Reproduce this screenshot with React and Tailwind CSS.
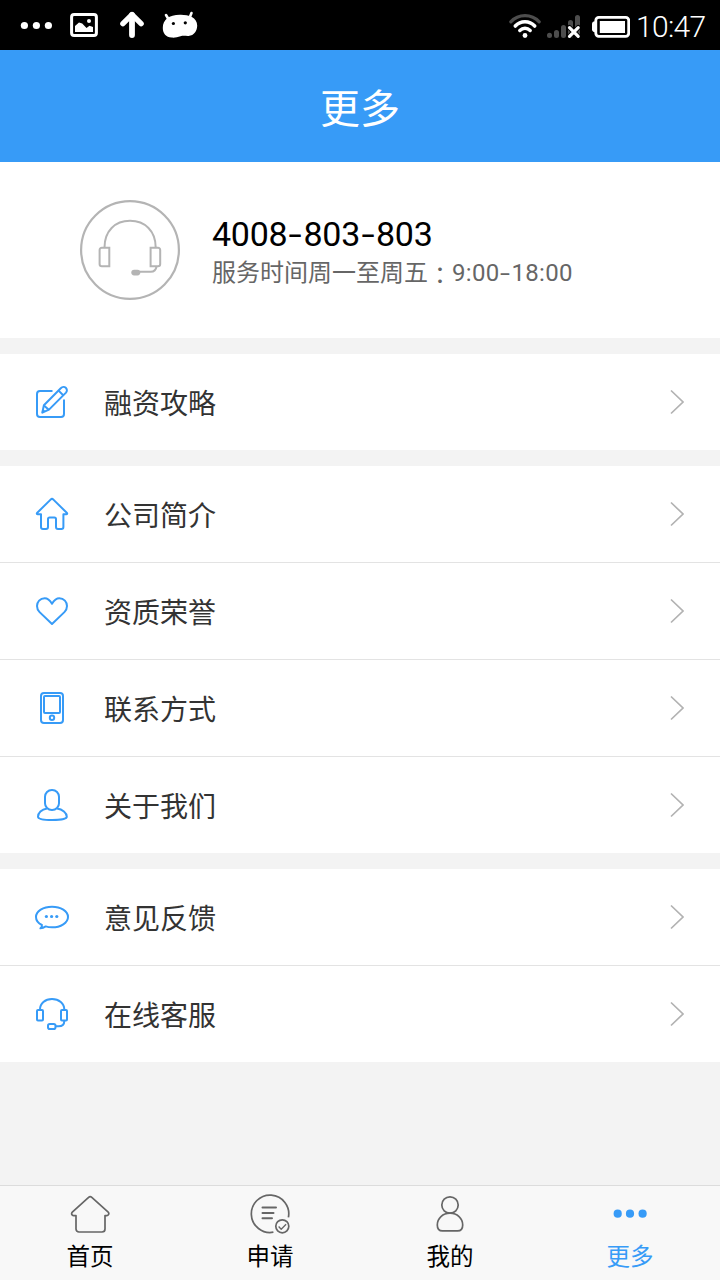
import React, { useState } from 'react';

// Icons for the menu rows, all on a 36px grid
const ICONS = {
  edit: (
    <>
      <path d="M18.500 7H6a3 3 0 0 0-3 3v20a3 3 0 0 0 3 3h21a3 3 0 0 0 3-3V15.500" />
      <path d="M8.300 28.600l1.600-7.400L27 4a3.200 3.200 0 0 1 5 4.600L15 25.600z" />
      <path d="M24.600 6.600l4.600 4.600M10.200 21.800l4.600 4M8.300 28.600l2.200-2.400" />
    </>
  ),
  house: (
    <path d="M16.600 3.600a2 2 0 0 1 2.800 0L33 17c.4.5.1 1.300-.6 1.300h-3V31a2 2 0 0 1-2 2H24a2 2 0 0 1-2-2v-8a1.600 1.600 0 0 0-1.600-1.600h-4.800A1.600 1.600 0 0 0 14 23v8a2 2 0 0 1-2 2H9a2 2 0 0 1-2-2V18.300H3.600c-.7 0-1-.8-.6-1.300z" />
  ),
  heart: (
    <path d="M18 10.800C15.800 7.200 13.800 5.300 10.700 5.300C6 5.300 3 8.900 3 13c0 2.400 1 4.500 2.600 6.100L18 31l12.400-11.900C32 17.500 33 15.400 33 13c0-4.100-3-7.700-7.700-7.700C22.200 5.300 20.200 7.200 18 10.800z" />
  ),
  phone: (
    <>
      <rect x="7" y="3" width="22" height="30" rx="3" />
      <rect x="10" y="6" width="16" height="17" rx="1" />
      <circle cx="18" cy="27.800" r="2.200" />
    </>
  ),
  user: (
    <>
      <rect x="11" y="3" width="14" height="20" rx="6.800" />
      <path d="M13 21.600C7.500 22.400 4 26 4 29.800c0 2.200 6.500 3.300 14.300 3.300s14.500-1.100 14.500-3.300c0-3.800-4.300-7.400-9.800-8.200" />
    </>
  ),
  chat: (
    <>
      <path d="M6.400 29.300c1.200-.8 1.700-2 1.500-3.300C4.200 24.200 2 21.300 2 18c0-5.700 7.200-10.300 16-10.300S34 12.300 34 18s-7.200 10.300-16 10.300c-2.300 0-4.400-.3-6.300-.9-1.600 1-3.400 1.700-5.300 1.900z" />
      <g fill="currentColor" stroke="none">
        <circle cx="12.400" cy="17.500" r="1.600" />
        <circle cx="17.600" cy="17.500" r="1.600" />
        <circle cx="22.800" cy="17.500" r="1.600" />
      </g>
    </>
  ),
  headset: (
    <>
      <path d="M6 13.500C6 7.500 11 3 18 3s12.300 4.500 12.300 10.500" />
      <rect x="3" y="14" width="6" height="10.500" rx="1" />
      <rect x="27" y="14" width="6" height="10.500" rx="1" />
      <path d="M30.300 25c0 3.300-2.300 5.300-5.800 5.300H22" />
      <rect x="14" y="28" width="7.500" height="5" rx="1.800" />
    </>
  ),
};

const GROUPS = [
  [{ icon: 'edit', label: '融资攻略' }],
  [
    { icon: 'house', label: '公司简介' },
    { icon: 'heart', label: '资质荣誉' },
    { icon: 'phone', label: '联系方式' },
    { icon: 'user', label: '关于我们' },
  ],
  [
    { icon: 'chat', label: '意见反馈' },
    { icon: 'headset', label: '在线客服' },
  ],
];

// Bottom tabs, 40px grid
const TABS = [
  {
    id: 'home',
    label: '首页',
    icon: (
      <path d="M18.600 3.400a2.400 2.400 0 0 1 3.200 0L38.200 18.200c1.200 1.200.5 3.400-1.200 3.400h-2V35a3 3 0 0 1-3 3H9a3 3 0 0 1-3-3V21.600H3.500c-1.700 0-2.500-2.200-1.200-3.400z" />
    ),
  },
  {
    id: 'apply',
    label: '申请',
    icon: (
      <>
        <path d="M38.400 23.400A18.700 18.700 0 1 0 23.400 38.200" />
        <path d="M12.500 13.400H26M12.500 18.900h11M12.500 24.200h9.500" strokeWidth="2" strokeLinecap="round" />
        <circle cx="32.300" cy="32.300" r="6.500" />
        <path d="M28.600 32.500l2.600 2.700 4.900-5" strokeWidth="1.300" />
      </>
    ),
  },
  {
    id: 'mine',
    label: '我的',
    icon: (
      <>
        <circle cx="20" cy="11" r="8.200" />
        <path d="M20 19.200c-7.200 0-12.700 5-12.700 11.700 0 3.700 2 6 5.200 6h15c3.200 0 5.200-2.300 5.200-6 0-6.700-5.500-11.700-12.700-11.700z" />
      </>
    ),
  },
  {
    id: 'more',
    label: '更多',
    icon: (
      <g fill="currentColor" stroke="none">
        <circle cx="7.700" cy="19.700" r="4.100" />
        <circle cx="20" cy="19.700" r="4.100" />
        <circle cx="32.600" cy="19.700" r="4.100" />
      </g>
    ),
  },
];

function StatusBar() {
  return (
    <div className="flex h-[50px] shrink-0 items-center justify-between bg-black pl-5 pr-3 text-white">
      <div className="flex items-center">
        <svg width="32" height="50" viewBox="0 0 32 50" fill="currentColor">
          <circle cx="4.400" cy="25.500" r="3.600" />
          <circle cx="16.400" cy="25.500" r="3.600" />
          <circle cx="28.400" cy="25.500" r="3.600" />
        </svg>
        <svg className="ml-[18px]" width="28" height="50" viewBox="0 0 28 50">
          <rect x="1.600" y="14.500" width="24.800" height="21" rx="2.500" fill="none" stroke="currentColor" strokeWidth="3" />
          <path d="M5 32v-6l4-3.400 3.200.8L16.500 28l3-2.200L23 27v5z" fill="currentColor" />
          <circle cx="19" cy="21" r="2" fill="currentColor" />
        </svg>
        <svg className="ml-[22px]" width="24" height="50" viewBox="0 0 24 50" fill="none" stroke="currentColor" strokeWidth="5.800" strokeLinecap="round" strokeLinejoin="round">
          <path d="M12 35V15" />
          <path d="M2.900 23.700L12 14.600l9.100 9.100" strokeWidth="5.400" />
        </svg>
        <svg className="ml-[18px]" width="36" height="50" viewBox="0 0 36 50">
          <path d="M4 15l3 5M29.500 13l-2 5" stroke="currentColor" strokeWidth="2.600" strokeLinecap="round" />
          <path d="M18 14.700C26 14.500 35.200 17 35.200 25.500c0 5-3 10.200-8.700 10.400-3 .1-5.500-.5-8 .4-3 1.200-6 1.500-9 1.300C4 37.200.8 33.500.8 28c0-8.500 6-13 17.200-13.300z" fill="currentColor" />
          <circle cx="11.400" cy="23.500" r="1.600" fill="#000" />
          <circle cx="23.300" cy="22.800" r="1.600" fill="#000" />
        </svg>
      </div>

      <div className="flex items-center">
        <svg width="32" height="50" viewBox="0 0 32 50" fill="none" strokeLinecap="round" strokeWidth="3.200">
          <path d="M1.800 21.800C9.500 13.600 22.500 13.600 30.200 21.800" stroke="#4d4d4d" />
          <path d="M6.300 26c5.400-5.700 14-5.700 19.400 0" stroke="currentColor" strokeWidth="3.600" />
          <path d="M10.800 30.500c3-3 7.400-3 10.400 0" stroke="currentColor" strokeWidth="3.400" />
          <circle cx="16" cy="35.500" r="2.400" fill="currentColor" />
        </svg>
        <svg className="ml-[6px]" width="34" height="50" viewBox="0 0 34 50" fill="none" strokeLinecap="round">
          <path d="M2.500 35.300v.2M9.500 32.500v3M16.500 27.500v8M23.500 22.500v13M30.500 17.500v18" stroke="#4d4d4d" strokeWidth="5" />
          <path d="M22.300 27.500l9 9M31.300 27.500l-9 9" stroke="#000" strokeWidth="5" />
          <path d="M22.500 27.700l8.700 8.700M31.200 27.700l-8.700 8.700" stroke="currentColor" strokeWidth="3.200" />
        </svg>
        <svg className="ml-[11px]" width="38" height="50" viewBox="0 0 38 50">
          <rect x="3.800" y="17.300" width="32.900" height="19" rx="3" fill="none" stroke="currentColor" strokeWidth="2.800" />
          <rect x="7.800" y="21" width="25.200" height="12" fill="currentColor" />
          <path d="M3 21.300C1 21.500 0 22.500 0 24v5.500c0 1.500 1 2.500 3 2.700z" fill="currentColor" />
        </svg>
        <span className="ml-[6px] mt-[4px] w-[72px] whitespace-nowrap text-[30px] font-light leading-none tracking-[-0.7px]">10:47</span>
      </div>
    </div>
  );
}

function Hotline() {
  return (
    <section className="flex h-44 shrink-0 items-center bg-white pl-20">
      <svg className="shrink-0" width="100" height="100" viewBox="0 0 100 100" fill="none" stroke="#b4b4b4" strokeWidth="2">
        <circle cx="50" cy="50" r="48.900" strokeWidth="2.200" />
        <path d="M24.500 47.500c0-16.500 10.500-26.700 25.500-26.700s25.700 10.200 25.700 26.700" />
        <path d="M29.300 47.700v18.500h-7.500a2.200 2.200 0 0 1-2.200-2.200V50a2.200 2.200 0 0 1 2.200-2.300z" />
        <path d="M70.600 47.700v18.500H78a2.200 2.200 0 0 0 2.200-2.200V50a2.200 2.200 0 0 0-2.200-2.300z" />
        <path d="M76.500 66.500c-.5 3.500-2.300 5.300-5.800 5.300H59" />
        <rect x="51.300" y="69.800" width="9" height="5.600" rx="2.800" fill="#b4b4b4" stroke="none" />
      </svg>
      <div className="ml-8 pt-[6px]">
        <p className="flex text-[34px] leading-10 tracking-[-0.25px] text-black">
          4008<Dash />803<Dash />803
        </p>
        <p className="flex text-2xl leading-[39px] text-[#666]">
          服务时间周一至周五<span className="font-['Noto_Sans_CJK_TC',sans-serif]">：</span>
          <span className="tracking-[0.3px]">9:00</span>
          <span className="w-[12px] scale-x-150 text-center">-</span>
          <span className="tracking-[0.3px]">18:00</span>
        </p>
      </div>
    </section>
  );
}

function Dash() {
  return <span className="w-4 scale-x-140 text-center">-</span>;
}

function MenuRow({ icon, label }) {
  return (
    <button type="button" className="flex h-24 w-full items-center pl-[34px] pr-9 text-left">
      <svg className="shrink-0 text-[#379bf7]" width="36" height="36" viewBox="0 0 36 36" fill="none" stroke="currentColor" strokeWidth="2" strokeLinejoin="round">
        {ICONS[icon]}
      </svg>
      <span className="ml-[34px] flex-1 pt-[6px] text-[28px] leading-10 text-[#333]">{label}</span>
      <svg width="14" height="26" viewBox="0 0 14 26" fill="none" stroke="#b2b2b2" strokeWidth="1.700">
        <path d="M1 1.500L13 13 1 24.500" />
      </svg>
    </button>
  );
}

export default function App() {
  const [tab, setTab] = useState('more');

  return (
    <div className="flex h-[1280px] w-[720px] flex-col overflow-hidden bg-[#f3f3f3] font-[Roboto,'Noto_Sans_CJK_SC',sans-serif]">
      <StatusBar />

      <header className="flex h-28 shrink-0 items-center justify-center bg-[#379bf7]">
        <h1 className="pt-[7px] text-[40px] leading-none text-white">更多</h1>
      </header>

      <main className="flex flex-1 flex-col gap-4">
        <Hotline />
        {GROUPS.map((rows, i) => (
          <section key={i} className="divide-y divide-[#e3e3e3] bg-white">
            {rows.map(row => (
              <div key={row.label}>
                <MenuRow icon={row.icon} label={row.label} />
              </div>
            ))}
          </section>
        ))}
      </main>

      <nav className="grid h-[95px] shrink-0 grid-cols-4 border-t border-[#dcdcdc] bg-[#f8f8f8]">
        {TABS.map(t => (
          <button
            key={t.id}
            type="button"
            onClick={() => setTab(t.id)}
            className="flex flex-col items-center pt-2"
          >
            <svg
              className={tab === t.id ? 'text-[#379bf7]' : 'text-[#666]'}
              width="40"
              height="40"
              viewBox="0 0 40 40"
              fill="none"
              stroke="currentColor"
              strokeWidth="1.700"
              strokeLinejoin="round"
            >
              {t.icon}
            </svg>
            <span className={`mt-[5px] text-[23.5px] leading-9 ${tab === t.id ? 'text-[#379bf7]' : 'text-black'}`}>
              {t.label}
            </span>
          </button>
        ))}
      </nav>
    </div>
  );
}
